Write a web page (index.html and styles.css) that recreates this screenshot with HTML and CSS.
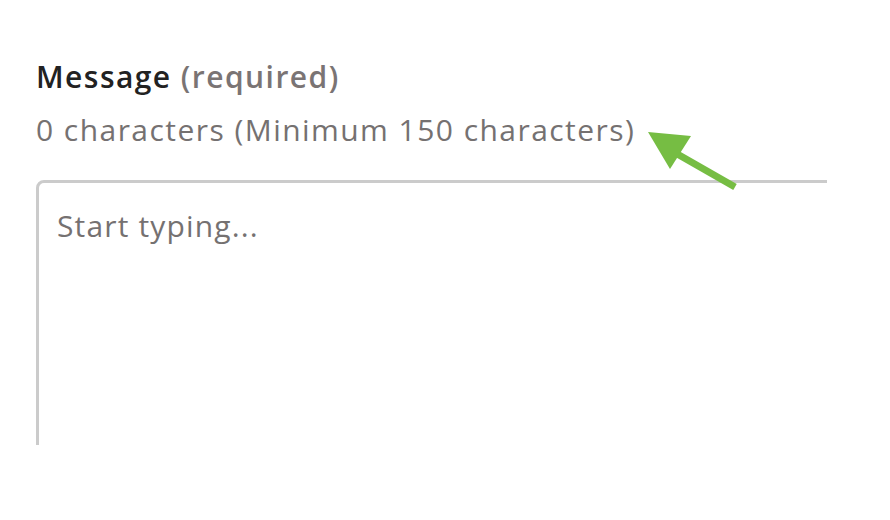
FILE: index.html
```html
<!DOCTYPE html>
<html>
<head>
<meta charset="utf-8">
<link rel="stylesheet" href="styles.css">
</head>
<body>
<div class="page">
  <div class="field">
    <div class="label"><span class="name">Message</span> <span class="req">(required)</span></div>
    <div class="count">0 characters (Minimum 150 characters)</div>
    <div class="clip">
      <div class="box"><span class="placeholder">Start typing...</span></div>
    </div>
  </div>
  <svg class="arrow" width="890" height="520" viewBox="0 0 890 520">
    <line x1="665" y1="147" x2="735" y2="187" stroke="#76bd43" stroke-width="7"/>
    <polygon points="648,132 691,136 670,169" fill="#76bd43"/>
  </svg>
</div>
</body>
</html>
```
FILE: styles.css
```css
html, body {
  margin: 0;
  padding: 0;
  background: #ffffff;
}
.page {
  position: relative;
  width: 890px;
  height: 520px;
  overflow: hidden;
  font-family: "Open Sans", "Liberation Sans", sans-serif;
}
.field {
  padding: 57px 0 0 36px;
}
.label {
  font-size: 30px;
  line-height: 40px;
  font-weight: 600;
  letter-spacing: 1.45px;
}
.name {
  color: #222222;
}
.req {
  color: #7a7474;
}
.count {
  font-size: 30px;
  line-height: 40px;
  color: #757171;
  margin-top: 13px;
  letter-spacing: 1.45px;
}
.clip {
  margin-top: 30px;
  width: 791px;
  height: 265px;
  overflow: hidden;
}
.box {
  box-sizing: border-box;
  width: 900px;
  height: 400px;
  border: 3px solid #cbcbcb;
  border-radius: 8px;
  padding: 23px 18px;
  font-size: 30px;
  line-height: 40px;
  letter-spacing: 1.15px;
}
.placeholder {
  color: #757171;
}
.arrow {
  position: absolute;
  left: 0;
  top: 0;
}
```
